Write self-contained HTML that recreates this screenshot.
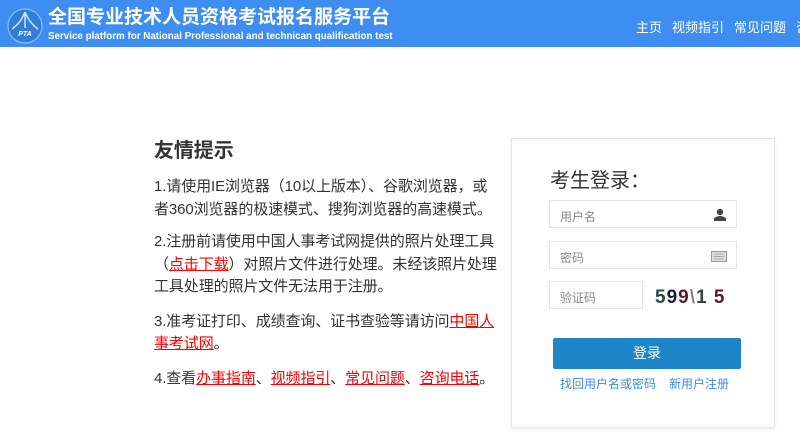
<!DOCTYPE html>
<html><head><meta charset="utf-8"><style>
*{margin:0;padding:0;box-sizing:border-box}
body{width:800px;height:438px;overflow:hidden;background:#fff;font-family:"Liberation Sans","Noto Sans CJK SC",sans-serif;position:relative}
.hd{position:absolute;left:0;top:0;width:800px;height:47px;background:#3e8ef2;overflow:hidden}
.t1{position:absolute;left:48px;top:2px;color:#fff;font-size:19px;font-weight:bold;white-space:nowrap}
.t2{position:absolute;left:48px;top:31px;color:#fff;font-size:9.8px;font-weight:bold;white-space:nowrap}
.nav{position:absolute;left:636px;top:17px;color:#fff;font-size:13px;white-space:nowrap}
.nav span{margin-right:10px}
.tips{position:absolute;left:154px;top:134px;color:#333;font-size:15px;white-space:nowrap;letter-spacing:-0.1px}
.tips h2{font-size:20px;font-weight:bold;margin-bottom:13px;color:#333}
.tips p{line-height:22.5px;margin-bottom:10px}
.tips p.b{margin-bottom:12px}
.r{color:#f00;text-decoration:underline}
.box{position:absolute;left:511px;top:138px;width:264px;height:290px;border:1px solid #e6e6e6;box-shadow:0 1px 3px rgba(0,0,0,.08)}
.box h3{position:absolute;left:38px;top:25px;font-size:20px;font-weight:normal;color:#333}
.in{position:absolute;left:37px;width:188px;height:28px;border:1px solid #e5e5e5;font-size:12px;color:#888;padding:7px 0 0 10px}
.btn{position:absolute;left:41px;top:199px;width:188px;height:31px;background:#1e86c8;border-radius:2px;color:#fff;font-size:14px;text-align:center;line-height:31px}
.lk{position:absolute;top:236px;font-size:12px;color:#3b8de0}
</style></head><body>
<div class="hd">
<svg style="position:absolute;left:7px;top:8px" width="36" height="36" viewBox="0 0 36 36"><circle cx="18" cy="18" r="17" fill="#2f7fd8" stroke="#8cc0f5" stroke-width="1.2"/><path d="M18 4 C14 14 9 18 5 21 M18 4 C22 14 27 18 31 21 M18 6 L18 20" stroke="#cfe6ff" stroke-width="1.5" fill="none"/><text x="18" y="28" font-size="7" font-weight="bold" font-style="italic" fill="#fff" text-anchor="middle" font-family="Liberation Sans">PTA</text></svg>
<div class="t1">全国专业技术人员资格考试报名服务平台</div>
<div class="t2">Service platform for National Professional and technican qualification test</div>
<div class="nav"><span>主页</span><span>视频指引</span><span>常见问题</span><span>咨询电话</span></div>
</div>
<div class="tips">
<h2>友情提示</h2>
<p>1.请使用IE浏览器（10以上版本）、谷歌浏览器，或<br>者360浏览器的极速模式、搜狗浏览器的高速模式。</p>
<p class="b">2.注册前请使用中国人事考试网提供的照片处理工具<br>（<span class="r">点击下载</span>）对照片文件进行处理。未经该照片处理<br>工具处理的照片文件无法用于注册。</p>
<p class="b">3.准考证打印、成绩查询、证书查验等请访问<span class="r">中国人</span><br><span class="r">事考试网</span>。</p>
<p>4.查看<span class="r">办事指南</span>、<span class="r">视频指引</span>、<span class="r">常见问题</span>、<span class="r">咨询电话</span>。</p>
</div>
<div class="box">
<h3>考生登录：</h3>
<div class="in" style="top:61px">用户名<svg style="position:absolute;right:10px;top:7px" width="12" height="13" viewBox="0 0 12 13"><circle cx="6" cy="4" r="3.2" fill="#444"/><path d="M0 13 L0 10 Q6 6 12 10 L12 13Z" fill="#444"/></svg></div>
<div class="in" style="top:102px">密码<svg style="position:absolute;right:9px;top:7px" width="16" height="13" viewBox="0 0 16 13"><rect x="0.5" y="2.5" width="15" height="10" fill="#ddd" stroke="#999"/><path d="M3 5h10M3 7.5h10M3 10h10" stroke="#aaa"/></svg></div>
<div class="in" style="top:142px;width:94px">验证码</div>
<div style="position:absolute;left:143px;top:144px;width:82px;height:30px;font:bold 19px 'Liberation Sans',sans-serif;letter-spacing:1px;padding-top:4px"><span style="color:#2a4a3a">5</span><span style="color:#1a1a3a">9</span><span style="color:#5a1a2a">9</span><span style="color:#888">\</span><span style="color:#2a4a3a">1</span> <span style="color:#5a1a2a">5</span></div>
<div class="btn">登录</div>
<div class="lk" style="left:48px">找回用户名或密码</div>
<div class="lk" style="left:157px">新用户注册</div>
</div>
</body></html>
